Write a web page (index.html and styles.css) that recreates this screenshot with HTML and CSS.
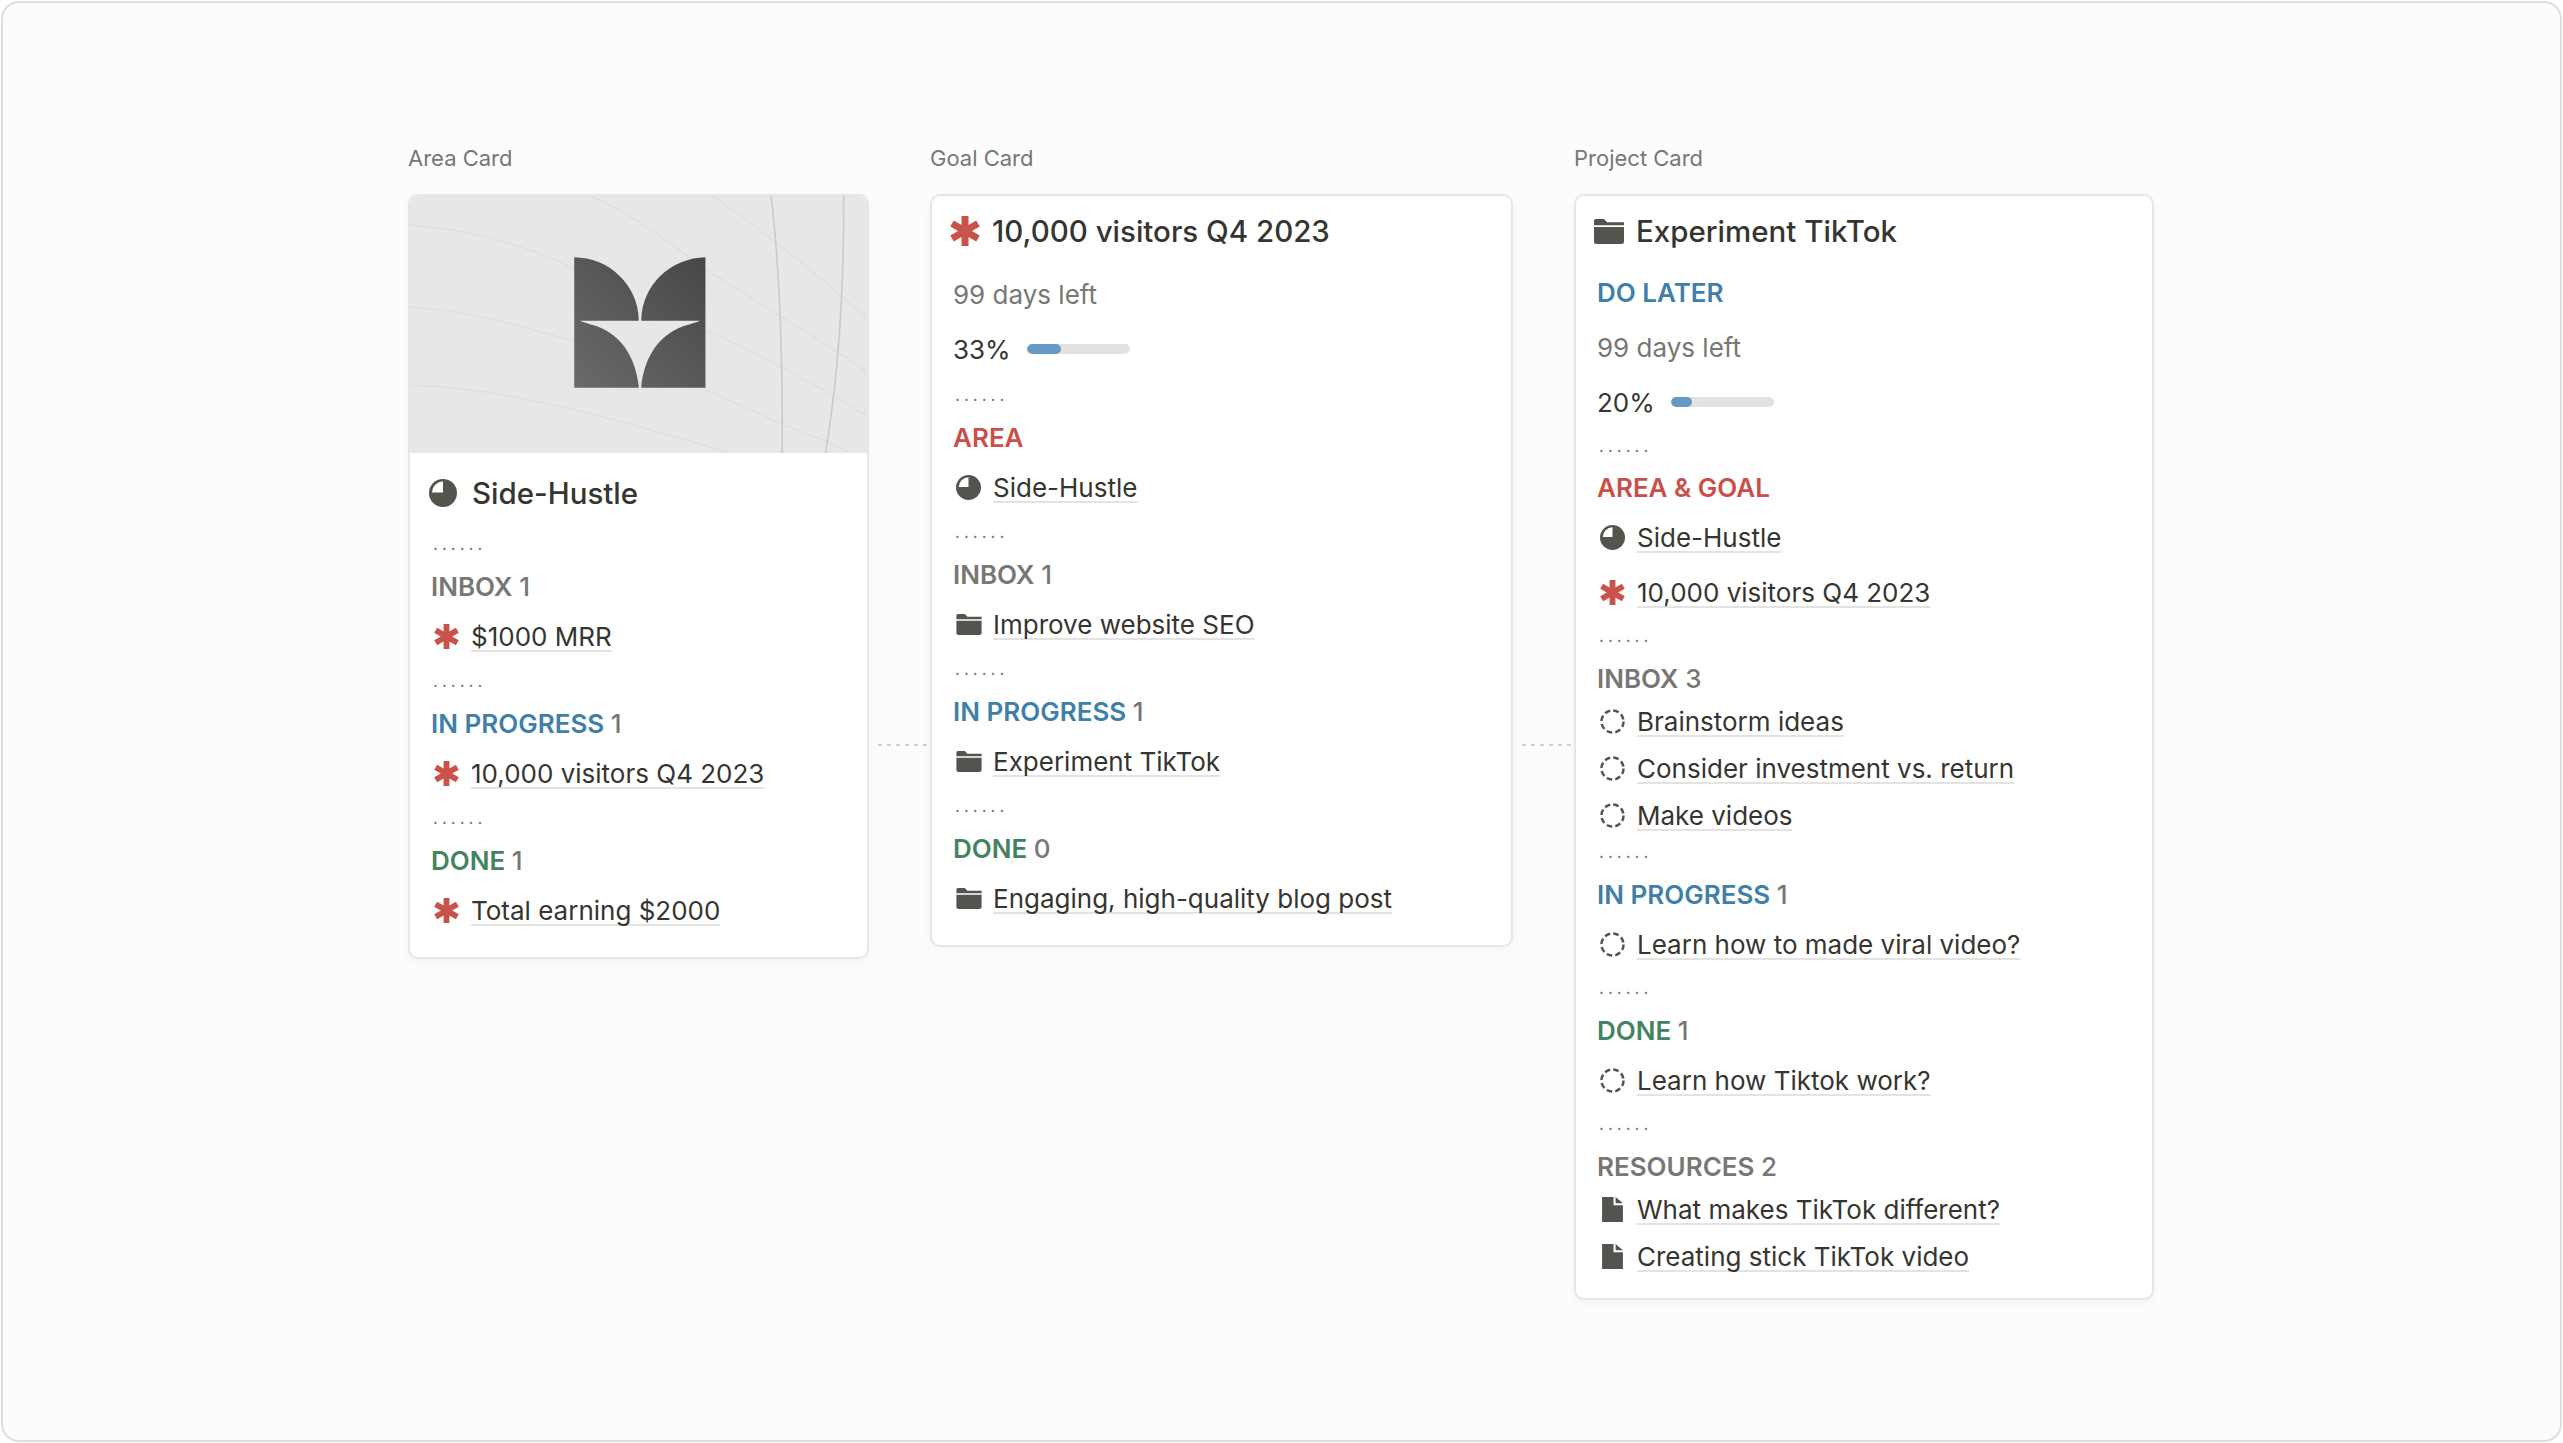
FILE: index.html
```html
<!DOCTYPE html>
<html lang="en">
<head>
<meta charset="utf-8">
<title>Cards</title>
<link rel="stylesheet" href="styles.css">
</head>
<body>
<svg class="defs" width="0" height="0" aria-hidden="true">
  <symbol id="i-star" viewBox="0 0 24 24">
    <path d="M12 0v24M1.6 6l20.8 12M22.4 6L1.6 18" fill="none" stroke="#c9534b" stroke-width="5.6"/>
  </symbol>
  <symbol id="i-pie" viewBox="0 0 24 24">
    <circle cx="12" cy="12" r="12" fill="#55534e"/>
    <path d="M12 11.6H2.6A9.6 9.6 0 0 1 12 2.2Z" fill="#fff"/>
  </symbol>
  <symbol id="i-folder" viewBox="0 0 24 20">
    <path d="M0 1.5A1.5 1.5 0 0 1 1.5 0H8l2.5 2.5H24V5H0Z" fill="#55534e"/>
    <path d="M0 6.4H24V18a2 2 0 0 1-2 2H2a2 2 0 0 1-2-2Z" fill="#55534e"/>
  </symbol>
  <symbol id="i-task" viewBox="0 0 24 24">
    <circle cx="12" cy="12" r="10.6" fill="none" stroke="#55534e" stroke-width="2.4" stroke-dasharray="5.4 3"/>
  </symbol>
  <symbol id="i-doc" viewBox="0 0 20 24">
    <path d="M0 0H11V8H20V24H0Z" fill="#55534e"/>
    <path d="M13 0L20 6H13Z" fill="#55534e"/>
  </symbol>
</svg>
<main class="frame">
  <div class="board">
    <section class="col col-area">
      <h2 class="label">Area Card</h2>
      <article class="card">
        <svg class="cover" viewBox="61 199 1369 769" preserveAspectRatio="none" aria-hidden="true">
          <defs>
            <linearGradient id="logo-fill" x1="0" y1="1" x2="1" y2="0">
              <stop offset="0" stop-color="#6a6a6a"/>
              <stop offset="1" stop-color="#474747"/>
            </linearGradient>
          </defs>
          <rect x="55" y="193" width="1381" height="775" fill="#e7e7e7"/>
          <g fill="none" stroke="#dddddd" stroke-width="3.5">
            <path d="M55 285C250 300 420 350 560 420"/>
            <path d="M55 530C250 545 400 590 555 635"/>
            <path d="M55 765C300 770 560 830 1020 968"/>
            <path d="M590 193C700 240 800 310 950 420C1120 530 1280 620 1436 730"/>
            <path d="M960 193C1100 290 1280 430 1436 570"/>
            <path d="M945 600C1120 680 1290 770 1436 860"/>
            <path d="M945 780C1030 815 1110 850 1180 885C1270 915 1350 950 1380 968"/>
          </g>
          <g fill="none" stroke="#cbcbcb" stroke-width="5">
            <path d="M1142 193C1165 380 1178 600 1176 968"/>
            <path d="M1360 193C1362 500 1340 760 1306 968"/>
          </g>
          <path fill="url(#logo-fill)" d="M553 382A196 190 0 0 1 746 566L746 572H553ZM946 382A196 190 0 0 0 754 566L754 572H946ZM553 572H570C590 580 600 582 625 590C690 615 735 675 746 765V773H553ZM946 572H930C910 580 900 582 875 590C810 615 765 675 754 765V773H946Z"/>
        </svg>
        <div class="card-body card-body-area">
          <h3 class="title title-area"><svg class="icon icon-title-pie"><use href="#i-pie"/></svg>Side-Hustle</h3>
          <p class="dots">......</p>
          <h4 class="head gray">INBOX <span class="count">1</span></h4>
          <div class="row"><span class="slot"><svg class="icon icon-star"><use href="#i-star"/></svg></span><a class="link">$1000 MRR</a></div>
          <p class="dots">......</p>
          <h4 class="head blue">IN PROGRESS <span class="count">1</span></h4>
          <div class="row"><span class="slot"><svg class="icon icon-star"><use href="#i-star"/></svg></span><a class="link">10,000 visitors Q4 2023</a></div>
          <p class="dots">......</p>
          <h4 class="head green">DONE <span class="count">1</span></h4>
          <div class="row"><span class="slot"><svg class="icon icon-star"><use href="#i-star"/></svg></span><a class="link">Total earning $2000</a></div>
        </div>
      </article>
    </section>

    <div class="connector"></div>

    <section class="col col-goal">
      <h2 class="label">Goal Card</h2>
      <article class="card">
        <div class="card-body">
          <h3 class="title title-goal"><svg class="icon icon-title-star"><use href="#i-star"/></svg>10,000 visitors Q4 2023</h3>
          <div class="meta meta-goal">
            <p class="row muted">99 days left</p>
            <div class="row progress"><span>33%</span><span class="track"><span class="fill fill-33"></span></span></div>
          </div>
          <p class="dots">......</p>
          <h4 class="head red">AREA</h4>
          <div class="row"><span class="slot"><svg class="icon icon-pie"><use href="#i-pie"/></svg></span><a class="link">Side-Hustle</a></div>
          <p class="dots">......</p>
          <h4 class="head gray">INBOX <span class="count">1</span></h4>
          <div class="row"><span class="slot"><svg class="icon icon-folder"><use href="#i-folder"/></svg></span><a class="link">Improve website SEO</a></div>
          <p class="dots">......</p>
          <h4 class="head blue">IN PROGRESS <span class="count">1</span></h4>
          <div class="row"><span class="slot"><svg class="icon icon-folder"><use href="#i-folder"/></svg></span><a class="link">Experiment TikTok</a></div>
          <p class="dots">......</p>
          <h4 class="head green">DONE <span class="count">0</span></h4>
          <div class="row"><span class="slot"><svg class="icon icon-folder"><use href="#i-folder"/></svg></span><a class="link">Engaging, high-quality blog post</a></div>
        </div>
      </article>
    </section>

    <div class="connector"></div>

    <section class="col col-project">
      <h2 class="label">Project Card</h2>
      <article class="card">
        <div class="card-body card-body-project">
          <h3 class="title title-project"><svg class="icon icon-title-folder"><use href="#i-folder"/></svg>Experiment TikTok</h3>
          <div class="meta">
            <p class="row status blue">DO LATER</p>
            <p class="row muted">99 days left</p>
            <div class="row progress"><span>20%</span><span class="track"><span class="fill fill-20"></span></span></div>
          </div>
          <p class="dots dots-up">......</p>
          <h4 class="head red">AREA &amp; GOAL</h4>
          <div class="stack">
            <div class="row"><span class="slot"><svg class="icon icon-pie"><use href="#i-pie"/></svg></span><a class="link">Side-Hustle</a></div>
            <div class="row"><span class="slot"><svg class="icon icon-star"><use href="#i-star"/></svg></span><a class="link">10,000 visitors Q4 2023</a></div>
          </div>
          <p class="dots">......</p>
          <h4 class="head gray">INBOX <span class="count">3</span></h4>
          <div class="compact">
            <div class="row"><span class="slot"><svg class="icon icon-task"><use href="#i-task"/></svg></span><a class="link">Brainstorm ideas</a></div>
            <div class="row"><span class="slot"><svg class="icon icon-task"><use href="#i-task"/></svg></span><a class="link">Consider investment vs. return</a></div>
            <div class="row"><span class="slot"><svg class="icon icon-task"><use href="#i-task"/></svg></span><a class="link">Make videos</a></div>
          </div>
          <p class="dots">......</p>
          <h4 class="head blue">IN PROGRESS <span class="count">1</span></h4>
          <div class="row"><span class="slot"><svg class="icon icon-task"><use href="#i-task"/></svg></span><a class="link">Learn how to made viral video?</a></div>
          <p class="dots">......</p>
          <h4 class="head green">DONE <span class="count">1</span></h4>
          <div class="row"><span class="slot"><svg class="icon icon-task"><use href="#i-task"/></svg></span><a class="link">Learn how Tiktok work?</a></div>
          <p class="dots">......</p>
          <h4 class="head gray">RESOURCES <span class="count">2</span></h4>
          <div class="compact">
            <div class="row"><span class="slot"><svg class="icon icon-doc"><use href="#i-doc"/></svg></span><a class="link">What makes TikTok different?</a></div>
            <div class="row"><span class="slot"><svg class="icon icon-doc"><use href="#i-doc"/></svg></span><a class="link">Creating stick TikTok video</a></div>
          </div>
        </div>
      </article>
    </section>
  </div>
</main>
</body>
</html>
```
FILE: styles.css
```css
* { box-sizing: border-box; }
html, body { height: 100%; }
body {
  margin: 0;
  padding: 1px;
  background: #fff;
  overflow: hidden;
  font-family: Inter, "Liberation Sans", sans-serif;
  color: #37352f;
}
.defs { position: absolute; }
.frame {
  height: 100%;
  border: 2px solid #dedede;
  border-radius: 18px;
  background: #fcfcfc;
  padding: 140px 0 0 405px;
}
.board { display: flex; align-items: flex-start; }
.col-area { width: 461px; }
.col-goal { width: 583px; }
.col-project { width: 580px; }
.connector {
  width: 61px;
  margin: 601px 0 0;
  padding: 0 2px 0 4px;
  height: 2px;
  background-image: repeating-linear-gradient(90deg, #cfcfcf 0 4px, transparent 4px 9px);
  background-clip: content-box;
}
.label {
  margin: 0 0 21px;
  height: 30px;
  line-height: 30px;
  font-size: 22px;
  font-weight: 400;
  color: #787774;
}
.card {
  background: #fff;
  border: 2px solid #e6e6e5;
  border-radius: 10px;
  box-shadow: 0 3px 10px rgba(0, 0, 0, .035);
  overflow: hidden;
}
.cover { display: block; width: 100%; height: 257px; }
.card-body { padding: 11px 22px 23px 21px; }
.card-body-area { padding-top: 16px; }
.card-body-project { padding-bottom: 25px; }
.title {
  display: flex;
  align-items: center;
  height: 48px;
  margin: 0;
  font-size: 29.5px;
  font-weight: 500;
}
.title-area { margin-bottom: 6px; }
.title-goal { margin-bottom: 15px; }
.title-project { margin-bottom: 13px; }
.icon { display: block; flex: none; }
.icon-title-pie { width: 28px; height: 28px; margin: 0 15px 0 -2px; }
.icon-title-star { width: 30px; height: 30px; margin: 0 12px 0 -3px; }
.icon-title-folder { width: 30px; height: 25px; margin: 0 12px 0 -3px; }
.icon-star { width: 25px; height: 25px; }
.icon-pie { width: 25px; height: 25px; }
.icon-folder { width: 26px; height: 21px; }
.icon-task { width: 25px; height: 25px; }
.icon-doc { width: 21px; height: 25px; }
.meta { display: flex; flex-direction: column; gap: 7px; }
.meta-goal { margin-bottom: 1px; }
.stack { display: flex; flex-direction: column; gap: 7px; }
.row {
  display: flex;
  align-items: center;
  height: 48px;
  margin: 0;
  font-size: 26px;
}
.compact { display: flex; flex-direction: column; gap: 13px; }
.compact .row { height: 34px; }
.slot { flex: none; width: 31px; margin-right: 9px; display: flex; justify-content: center; }
.link {
  color: #37352f;
  text-decoration: underline;
  text-decoration-color: #e3e3e1;
  text-decoration-thickness: 2px;
  text-underline-offset: 4px;
  text-decoration-skip-ink: none;
}
.muted { color: #787774; }
.status { font-weight: 600; }
.progress { gap: 16px; }
.track {
  display: block;
  width: 103px;
  height: 10px;
  border-radius: 5px;
  background: #e3e2e0;
  overflow: hidden;
}
.fill { display: block; height: 100%; border-radius: 5px; background: #6699c4; }
.fill-33 { width: 34px; }
.fill-20 { width: 21px; }
.dots {
  display: flex;
  align-items: center;
  height: 48px;
  margin: 0 0 0 2px;
  padding-bottom: 7px;
  font-size: 17px;
  letter-spacing: 4px;
  color: #787774;
}
.card-body-project .dots { height: 47px; }
.card-body-project .dots-up { margin-bottom: -1px; }
.head {
  height: 32px;
  line-height: 32px;
  margin: 0 0 9px;
  font-size: 26px;
  font-weight: 600;
}
.count { color: #787774; font-weight: 500; }
.gray { color: #787774; }
.blue { color: #3f7fa9; }
.red { color: #c9504a; }
.green { color: #448361; }
```
